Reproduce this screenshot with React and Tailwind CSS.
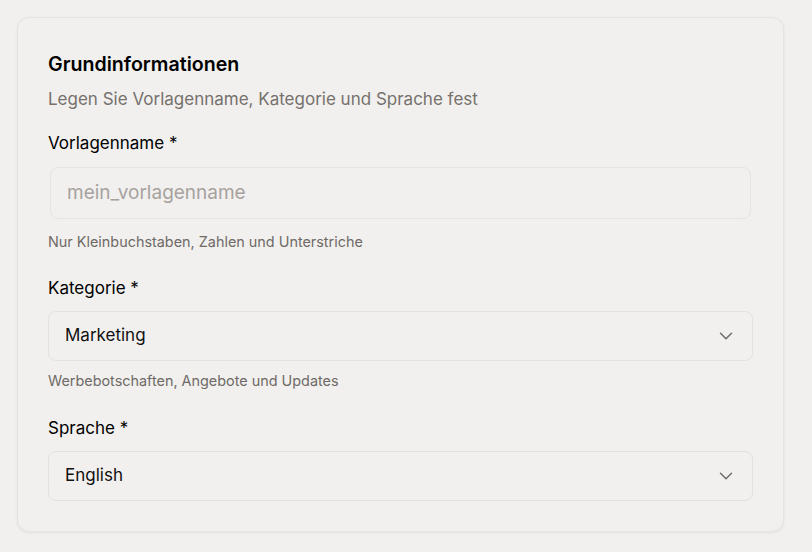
import React from "react";

const Chevron = () => (
  <svg className="w-[22px] h-[22px] text-[#6f6b68]" viewBox="0 0 24 24" fill="none" stroke="currentColor" strokeWidth="1.6" strokeLinecap="round" strokeLinejoin="round">
    <path d="m6 9 6 6 6-6" />
  </svg>
);

const SelectBox = ({ value }) => (
  <div className="h-[50px] flex items-center justify-between pl-4 pr-[15px] rounded-lg border border-[#e4e2df] bg-[#f1f0ee] text-[17px] text-[#111]">
    <span>{value}</span>
    <Chevron />
  </div>
);

export default function App() {
  return (
    <div className="min-h-screen bg-[#f1f0ee] pl-[17px] pr-[28px] pt-[17px] pb-[20px]" style={{ fontFamily: "Inter, 'Liberation Sans', sans-serif" }}>
      <div className="rounded-xl border border-[#e6e4e1] bg-[#f1f0ee] shadow-[0_1px_3px_rgba(0,0,0,0.06)] px-[30px] pt-[33px] pb-[30px]">
        <h2 className="text-[19.6px] font-semibold text-black leading-[26px]">Grundinformationen</h2>
        <p className="mt-[10px] text-[17px] leading-[24px] text-[#76716d]">Legen Sie Vorlagenname, Kategorie und Sprache fest</p>

        <div className="mt-[20px]">
          <label className="block text-[17px] leading-[24px] text-black">Vorlagenname *</label>
          <div className="mt-[12px] mx-[2px] h-[52px] flex items-center px-4 pt-[1px] rounded-lg border border-[#e6e4e1] bg-[#f1f0ee] text-[19px] text-[#a7a29e]">
            mein_vorlagenname
          </div>
          <p className="mt-[13px] text-[14.4px] leading-[20px] text-[#6f6a66]">Nur Kleinbuchstaben, Zahlen und Unterstriche</p>
        </div>

        <div className="mt-[24px]">
          <label className="block text-[17px] leading-[24px] text-black">Kategorie *</label>
          <div className="mt-[11px]">
            <SelectBox value="Marketing" />
          </div>
          <p className="mt-[10px] text-[14.4px] leading-[20px] text-[#6f6a66]">Werbebotschaften, Angebote und Updates</p>
        </div>

        <div className="mt-[25px]">
          <label className="block text-[17px] leading-[24px] text-black">Sprache *</label>
          <div className="mt-[11px]">
            <SelectBox value="English" />
          </div>
        </div>
      </div>
    </div>
  );
}
